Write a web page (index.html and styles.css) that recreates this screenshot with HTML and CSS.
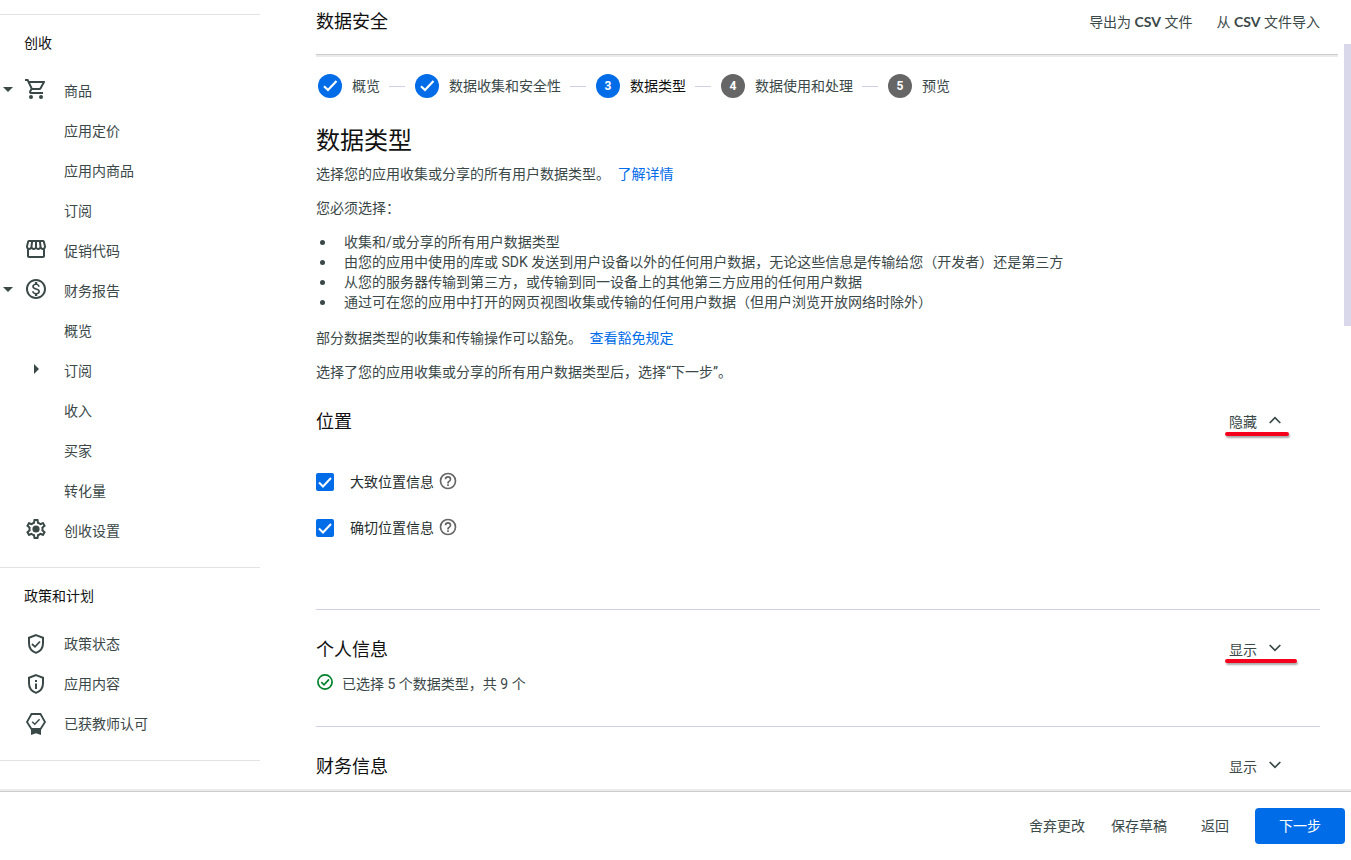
FILE: index.html
```html
<!DOCTYPE html>
<html lang="zh-CN">
<head>
<meta charset="utf-8">
<meta name="viewport" content="width=device-width, initial-scale=1">
<title>数据安全</title>
<link rel="stylesheet" href="styles.css">
</head>
<body>
<svg class="defs" aria-hidden="true">
  <symbol id="down" viewBox="0 0 10 5"><path d="M0 0h10L5 5z"/></symbol>
  <symbol id="right" viewBox="0 0 5 10"><path d="M0 0v10l5-5z"/></symbol>
  <symbol id="shield" viewBox="0 0 24 24"><path d="M12 3.1 19 5.7v5.6c0 4.4-2.9 8.2-7 9.6-4.1-1.4-7-5.2-7-9.6V5.7z" fill="none" stroke="currentColor" stroke-width="2"/></symbol>
  <symbol id="help" viewBox="0 0 24 24"><path d="M11 18h2v-2h-2zm1-16a10 10 0 1 0 0 20 10 10 0 0 0 0-20zm0 18a8 8 0 1 1 0-16 8 8 0 0 1 0 16zm0-14a4 4 0 0 0-4 4h2a2 2 0 1 1 4 0c0 2-3 1.750-3 5h2c0-2.250 3-2.500 3-5a4 4 0 0 0-4-4z"/></symbol>
  <symbol id="done" viewBox="0 0 16 16"><circle cx="8" cy="8" r="7.100" fill="none" stroke="currentColor" stroke-width="1.700"/><path d="m4.300 8.200 2.700 2.600L12 5.400" fill="none" stroke="currentColor" stroke-width="1.700"/></symbol>
  <symbol id="tick" viewBox="0 0 24 24"><path d="m6 12.300 4 3.700 8.500-9" fill="none" stroke="currentColor" stroke-width="2.200"/></symbol>
</svg>
<div class="workspace">
  <nav class="sidebar" aria-label="导航">
    <section class="nav-section nav-section--earn">
      <h2 class="nav-title">创收</h2>
      <a class="nav-item" href="#"><span class="nav-caret"><svg class="caret-down"><use href="#down"/></svg></span><svg class="nav-icon" viewBox="0 0 24 24"><path d="M15.550 13c.75 0 1.410-.41 1.750-1.030l3.580-6.490A.996.996 0 0 0 20.010 4H5.210l-.94-2H1v2h2l3.600 7.590-1.350 2.440C4.520 15.370 5.480 17 7 17h12v-2H7l1.100-2h7.450zM6.160 6h12.150l-2.760 5H8.530L6.160 6zM7 18a2 2 0 1 0 0 4 2 2 0 0 0 0-4zm10 0a2 2 0 1 0 0 4 2 2 0 0 0 0-4z"/></svg><span>商品</span></a>
      <a class="nav-item" href="#"><span class="nav-caret"></span><span class="nav-icon"></span><span>应用定价</span></a>
      <a class="nav-item" href="#"><span class="nav-caret"></span><span class="nav-icon"></span><span>应用内商品</span></a>
      <a class="nav-item" href="#"><span class="nav-caret"></span><span class="nav-icon"></span><span>订阅</span></a>
      <a class="nav-item" href="#"><span class="nav-caret"></span><svg class="nav-icon" viewBox="0 0 24 24"><path d="M21.900 8.890l-1.050-4.370C20.630 3.600 19.850 3 18.940 3H5.050c-.9 0-1.690.63-1.900 1.520L2.100 8.890c-.24 1.020-.02 2.060.62 2.880.08.11.19.19.28.29V19c0 1.100.9 2 2 2h14c1.100 0 2-.9 2-2v-6.940c.09-.09.2-.18.28-.28.64-.82.87-1.870.62-2.890zM18.910 4.990l1.050 4.370c.1.42.01.84-.25 1.170-.14.18-.44.47-.94.47-.61 0-1.140-.49-1.210-1.140L16.980 5l1.930-.01zM13 5h1.960l.54 4.520c.05.39-.07.78-.33 1.070-.22.26-.54.41-.95.41-.67 0-1.220-.59-1.220-1.310V5zM8.490 9.520 9.040 5H11v4.690c0 .72-.55 1.310-1.290 1.310-.34 0-.65-.15-.89-.41a1.420 1.420 0 0 1-.33-1.070zm-4.450-.16L5.050 5h1.970l-.58 4.860c-.08.65-.6 1.140-1.210 1.140-.49 0-.8-.29-.93-.47-.27-.32-.36-.75-.26-1.170zM5 19v-6.030c.08.01.15.03.23.03.87 0 1.660-.36 2.240-.95.6.6 1.400.95 2.310.95.87 0 1.650-.36 2.230-.93.59.57 1.390.93 2.290.93.84 0 1.640-.35 2.240-.95.58.59 1.370.95 2.240.95.08 0 .15-.02.23-.03V19H5z"/></svg><span>促销代码</span></a>
      <a class="nav-item" href="#"><span class="nav-caret"><svg class="caret-down"><use href="#down"/></svg></span><svg class="nav-icon" viewBox="0 0 24 24"><path d="M12 2C6.480 2 2 6.480 2 12s4.480 10 10 10 10-4.480 10-10S17.520 2 12 2zm0 18c-4.410 0-8-3.590-8-8s3.590-8 8-8 8 3.590 8 8-3.590 8-8 8zm.31-8.860c-1.770-.45-2.340-.94-2.340-1.670 0-.84.79-1.430 2.100-1.430 1.380 0 1.900.66 1.940 1.640h1.710c-.05-1.340-.87-2.570-2.490-2.970V5H10.900v1.690c-1.510.32-2.720 1.300-2.720 2.810 0 1.790 1.490 2.690 3.660 3.210 1.950.46 2.340 1.150 2.340 1.870 0 .53-.39 1.390-2.100 1.390-1.600 0-2.230-.72-2.320-1.640H8.040c.1 1.700 1.360 2.660 2.860 2.970V19h2.340v-1.670c1.520-.29 2.720-1.160 2.730-2.770-.01-2.200-1.900-2.960-3.660-3.420z"/></svg><span>财务报告</span></a>
      <a class="nav-item" href="#"><span class="nav-caret"></span><span class="nav-icon"></span><span>概览</span></a>
      <a class="nav-item" href="#"><span class="nav-caret"></span><span class="nav-icon"><svg class="caret-right"><use href="#right"/></svg></span><span>订阅</span></a>
      <a class="nav-item" href="#"><span class="nav-caret"></span><span class="nav-icon"></span><span>收入</span></a>
      <a class="nav-item" href="#"><span class="nav-caret"></span><span class="nav-icon"></span><span>买家</span></a>
      <a class="nav-item" href="#"><span class="nav-caret"></span><span class="nav-icon"></span><span>转化量</span></a>
      <a class="nav-item" href="#"><span class="nav-caret"></span><svg class="nav-icon" viewBox="0 0 24 24"><path d="M19.430 12.980c.04-.32.07-.64.07-.98s-.03-.66-.07-.98l2.110-1.650c.19-.15.24-.42.12-.64l-2-3.460a.5.5 0 0 0-.61-.22l-2.490 1c-.52-.4-1.080-.73-1.690-.98l-.38-2.650A.488.488 0 0 0 14 2h-4a.488.488 0 0 0-.49.42l-.38 2.650c-.61.25-1.170.59-1.690.98l-2.490-1a.5.5 0 0 0-.61.22l-2 3.460c-.13.22-.07.49.12.64l2.110 1.650c-.04.32-.07.65-.07.98s.03.66.07.98l-2.110 1.650a.5.5 0 0 0-.12.64l2 3.460c.12.22.38.3.61.22l2.490-1c.52.4 1.080.73 1.690.98l.38 2.650c.03.24.24.42.49.42h4c.25 0 .46-.18.49-.42l.38-2.650c.61-.25 1.170-.59 1.690-.98l2.490 1a.5.5 0 0 0 .61-.22l2-3.460a.5.5 0 0 0-.12-.64l-2.110-1.650zm-1.980-1.710c.04.31.05.52.05.73s-.02.43-.05.73l-.14 1.130.89.7 1.080.84-.7 1.210-1.270-.51-1.040-.42-.9.68c-.43.32-.84.56-1.250.73l-1.060.43-.16 1.130-.2 1.350h-1.400l-.35-2.480-1.060-.43c-.43-.18-.83-.41-1.230-.71l-.91-.7-1.060.43-1.270.51-.7-1.210 1.080-.84.89-.7-.14-1.130a7.500 7.500 0 0 1 0-1.480l.14-1.130-.89-.7-1.080-.84.7-1.210 1.270.51 1.040.42.9-.68c.43-.32.84-.56 1.250-.73l1.060-.43.16-1.130.2-1.350h1.390l.35 2.480 1.060.43c.43.18.83.41 1.230.71l.91.7 1.060-.43 1.270-.51.7 1.210-1.070.85-.89.7.14 1.130z"/><circle cx="12" cy="12" r="3.600"/></svg><span>创收设置</span></a>
    </section>
    <section class="nav-section">
      <h2 class="nav-title">政策和计划</h2>
      <a class="nav-item" href="#"><span class="nav-caret"></span><svg class="nav-icon" viewBox="0 0 24 24"><use href="#shield"/><path d="m8 12 3 2.800 5-5.300" fill="none" stroke="currentColor" stroke-width="1.800"/></svg><span>政策状态</span></a>
      <a class="nav-item" href="#"><span class="nav-caret"></span><svg class="nav-icon" viewBox="0 0 24 24"><use href="#shield"/><path d="M11 8h2v2h-2zm0 3.500h2V17h-2z"/></svg><span>应用内容</span></a>
      <a class="nav-item" href="#"><span class="nav-caret"></span><svg class="nav-icon" viewBox="0 0 24 24"><path d="M7.500 2h9l4.500 8-4.500 7h-9L3 10z" fill="none" stroke="currentColor" stroke-width="1.800"/><path d="m8.200 9.700 2.600 2.500 4.800-5" fill="none" stroke="currentColor" stroke-width="1.500"/><path d="M7 17h10v6l-5-1.800L7 23z"/></svg><span>已获教师认可</span></a>
    </section>
    <section class="nav-section"></section>
  </nav>
  <main class="main">
    <header class="topbar">
      <h1 class="page-title">数据安全</h1>
      <button class="text-button" type="button">导出为 <span class="latin">CSV</span> 文件</button>
      <button class="text-button" type="button">从 <span class="latin">CSV</span> 文件导入</button>
    </header>
    <div class="content">
      <ol class="stepper">
        <li class="step"><span class="badge"><svg class="badge-tick"><use href="#tick"/></svg></span>概览</li>
        <li class="step"><span class="badge"><svg class="badge-tick"><use href="#tick"/></svg></span>数据收集和安全性</li>
        <li class="step step--current"><span class="badge">3</span>数据类型</li>
        <li class="step step--next"><span class="badge">4</span>数据使用和处理</li>
        <li class="step step--next"><span class="badge">5</span>预览</li>
      </ol>
      <div class="intro">
        <h2 class="heading">数据类型</h2>
        <p>选择您的应用收集或分享的所有用户数据类型。 <a class="link" href="#">了解详情</a></p>
        <p>您必须选择：</p>
        <ul class="bullets">
          <li>收集和/或分享的所有用户数据类型</li>
          <li>由您的应用中使用的库或 SDK 发送到用户设备以外的任何用户数据，无论这些信息是传输给您（开发者）还是第三方</li>
          <li>从您的服务器传输到第三方，或传输到同一设备上的其他第三方应用的任何用户数据</li>
          <li>通过可在您的应用中打开的网页视图收集或传输的任何用户数据（但用户浏览开放网络时除外）</li>
        </ul>
        <p>部分数据类型的收集和传输操作可以豁免。 <a class="link" href="#">查看豁免规定</a></p>
        <p>选择了您的应用收集或分享的所有用户数据类型后，选择“下一步”。</p>
      </div>
      <section class="group group--open">
        <div class="group-head">
          <h3 class="group-title">位置</h3>
          <button class="toggle toggle--marked" type="button">隐藏<svg class="chevron" viewBox="0 0 12 8"><path d="m0.700 7 5.300-5.300L11.300 7"/></svg></button>
        </div>
        <div class="options">
          <div class="option"><span class="tickbox"><input class="check" type="checkbox" id="coarse" checked><svg class="check-mark" viewBox="0 0 18 18"><path d="m3 9.500 4 4 8-8.500"/></svg></span><label for="coarse">大致位置信息</label><svg class="help"><use href="#help"/></svg></div>
          <div class="option"><span class="tickbox"><input class="check" type="checkbox" id="fine" checked><svg class="check-mark" viewBox="0 0 18 18"><path d="m3 9.500 4 4 8-8.500"/></svg></span><label for="fine">确切位置信息</label><svg class="help"><use href="#help"/></svg></div>
        </div>
      </section>
      <section class="group">
        <div class="group-head">
          <h3 class="group-title">个人信息</h3>
          <button class="toggle toggle--marked toggle--wide" type="button">显示<svg class="chevron" viewBox="0 0 12 8"><path d="m0.700 1 5.300 5.300L11.300 1"/></svg></button>
        </div>
        <p class="status"><svg class="status-icon"><use href="#done"/></svg>已选择 5 个数据类型，共 9 个</p>
      </section>
      <section class="group">
        <div class="group-head">
          <h3 class="group-title">财务信息</h3>
          <button class="toggle" type="button">显示<svg class="chevron" viewBox="0 0 12 8"><path d="m0.700 1 5.300 5.300L11.300 1"/></svg></button>
        </div>
        <p class="status"><svg class="status-icon status-icon--muted"><use href="#done"/></svg></p>
      </section>
    </div>
  </main>
  <div class="scrollbar"><div class="thumb"></div></div>
</div>
<footer class="actions">
  <button class="text-button" type="button">舍弃更改</button>
  <button class="text-button" type="button">保存草稿</button>
  <button class="text-button text-button--back" type="button">返回</button>
  <button class="primary" type="button">下一步</button>
</footer>
</body>
</html>
```
FILE: styles.css
```css
* { box-sizing: border-box; }

body {
  margin: 0;
  height: 100vh;
  display: flex;
  flex-direction: column;
  overflow: hidden;
  background: #fff;
  color: #3a4848;
  font: 14px/20px Roboto, "Noto Sans CJK SC", sans-serif;
}

h1, h2, h3, p, ul, ol { margin: 0; padding: 0; font-weight: 400; }
a { color: inherit; text-decoration: none; }
svg { fill: currentColor; flex: none; }
button { font: inherit; color: inherit; background: none; border: 0; padding: 0; cursor: pointer; white-space: nowrap; }
.defs { display: none; }

.workspace { flex: 1; min-height: 0; display: flex; overflow: hidden; }

.sidebar { flex: none; width: 260px; padding-top: 14px; }
.nav-section { border-top: 1px solid #e3e3e3; padding-bottom: 16px; }
.nav-title { padding: 18px 24px; font-size: 14px; line-height: 20px; color: #111; }
.nav-item { display: flex; align-items: center; height: 40px; }
.nav-caret { display: flex; width: 24px; padding-left: 3px; }
.nav-icon { display: flex; align-items: center; justify-content: center; width: 24px; height: 24px; margin-right: 16px; }
.nav-section--earn .nav-icon, .nav-section--earn .nav-caret { margin-bottom: 4px; }
.caret-down { width: 10px; height: 5px; }
.caret-right { width: 5px; height: 10px; }

.main { flex: 1; min-width: 0; margin: 0 6px 0 56px; }
.topbar {
  display: flex;
  align-items: center;
  gap: 24px;
  height: 54px;
  padding: 0 18px 10px 0;
  box-shadow: 0 1px 0 #ccc, 0 3px 0 #ebebeb;
}
.page-title { flex: 1; font-size: 18px; line-height: 28px; color: #111; }
.latin { font-family: Lato, sans-serif; font-weight: 700; }

.content { padding: 20px 18px 0 0; }
.stepper { display: flex; align-items: center; list-style: none; padding-left: 2px; }
.step { display: flex; align-items: center; white-space: nowrap; }
.step + .step::before { content: ""; width: 16px; height: 1px; margin: 0 10px 0 9px; background: #cfcfe6; }
.step--current { color: #111; }
.badge {
  display: flex;
  align-items: center;
  justify-content: center;
  width: 24px;
  height: 24px;
  margin-right: 10px;
  border-radius: 50%;
  background: #006ce8;
  color: #fff;
  font-size: 12px;
  font-weight: 700;
}
.step--next .badge { background: #666; }
.badge-tick { width: 24px; height: 24px; }

.intro { display: grid; gap: 14px; padding-top: 27px; }
.heading { font-size: 24px; line-height: 32px; color: #111; margin-bottom: -7px; }
.link { color: #006ce8; margin-left: 4px; }
.bullets { list-style: none; padding-bottom: 2px; }
.bullets li { display: flex; align-items: center; }
.bullets li::before { content: ""; flex: none; width: 5px; height: 5px; margin: 0 19px 0 4px; border-radius: 50%; background: #3a4848; }

.group { border-top: 1px solid #cfcfe6; padding: 26px 0 32px; }
.group--open { border-top: 0; padding-bottom: 71px; }
.group-head { display: flex; align-items: center; justify-content: space-between; }
.group-title { font-size: 18px; line-height: 28px; color: #111; }
.toggle { position: relative; display: flex; align-items: center; gap: 12px; margin-right: 39px; }
.chevron { width: 12px; height: 8px; margin-bottom: 4px; fill: none; stroke: currentColor; stroke-width: 1.7; }
.toggle--marked::after {
  content: "";
  position: absolute;
  left: -4px;
  right: -8px;
  top: 20px;
  height: 4px;
  border-radius: 2px;
  background: #f5001d;
  box-shadow: 1px 2px 2px #aaa;
}
.toggle--wide::after { right: -16px; top: 19px; }

.options { display: grid; gap: 26px; padding-top: 36px; }
.option { display: flex; align-items: center; color: #1f2d2d; }
.option label { margin: 0 5px 0 16px; }
.tickbox { display: grid; width: 18px; height: 18px; }
.check, .check-mark { grid-area: 1 / 1; width: 18px; height: 18px; margin: 0; }
.check { appearance: none; border: 2px solid #666; border-radius: 2px; }
.check:checked { background: #006ce8; border-color: #006ce8; }
.check-mark { visibility: hidden; z-index: 1; pointer-events: none; fill: none; stroke: #fff; stroke-width: 2; }
.check:checked + .check-mark { visibility: visible; }
.help { width: 20px; height: 20px; margin: 0 0 2px -1px; color: #666; }
.option { height: 20px; }

.status { display: flex; align-items: center; gap: 9px; min-height: 20px; padding-left: 1px; margin-top: 10px; }
.status-icon { width: 16px; height: 16px; margin-bottom: 4px; color: #00802b; }
.status-icon--muted { color: #5b7f95; }

.scrollbar { flex: none; width: 7px; padding-top: 44px; }
.thumb { height: 282px; background: #d8d8ea; }

.actions {
  z-index: 1;
  flex: none;
  display: flex;
  align-items: center;
  justify-content: flex-end;
  gap: 26px;
  padding: 16px 6px;
  background: #fff;
  box-shadow: 0 -1px 0 #ccc, 0 -3px 0 #ebebeb;
}
.text-button--back { margin-left: 8px; }
.primary { min-width: 90px; height: 36px; padding: 0 24px; border-radius: 4px; background: #006ce8; color: #fff; }
```
